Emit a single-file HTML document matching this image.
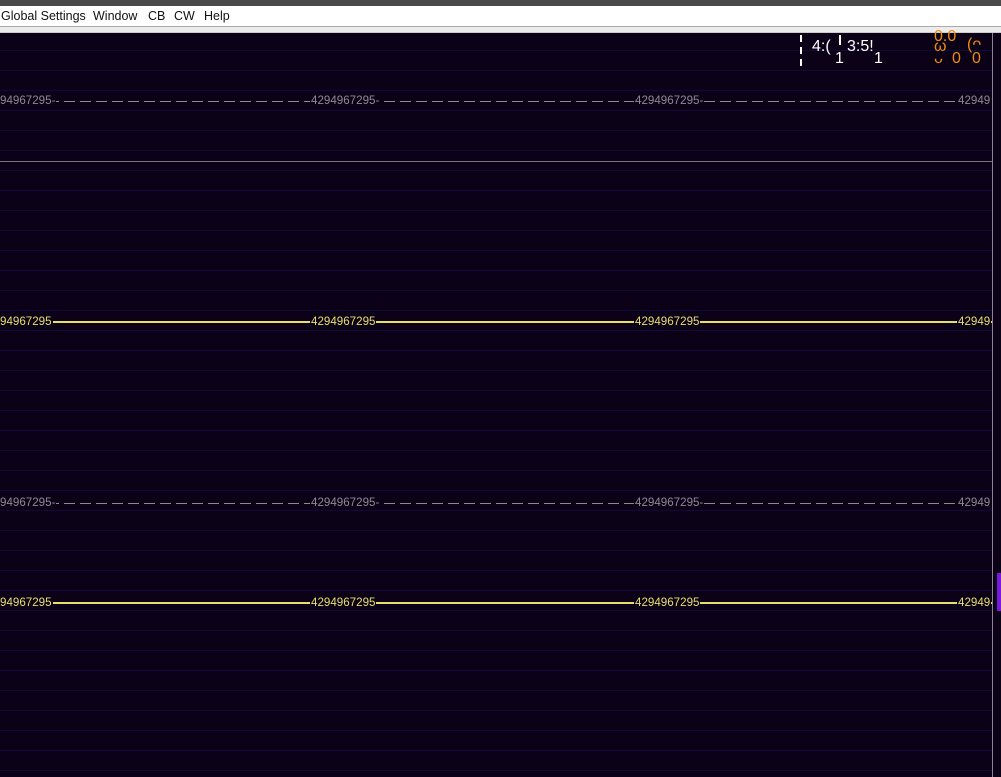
<!DOCTYPE html>
<html><head><style>
body{margin:0;width:1001px;height:777px;overflow:hidden;background:#0b0218;font-family:"Liberation Sans",sans-serif;position:relative}
.top{position:absolute;left:0;top:0;width:1001px;height:6px;background:#4a4a4a}
.menu{position:absolute;left:0;top:6px;width:1001px;height:21px;background:#fff;font-size:12.5px;color:#111}
.menu span{position:absolute;top:3px}
.sep{position:absolute;left:0;top:26px;width:1001px;height:7px;background:#ececec;border-top:1px solid #aaa;border-bottom:1px solid #ccc;box-sizing:border-box}
.grid{position:absolute;left:0;top:33px;width:992px;height:744px;background:repeating-linear-gradient(to bottom,transparent 0,transparent 17px,#0f0a3a 17px,#0f0a3a 18px,transparent 18px,transparent 20px)}
.vl{position:absolute;left:992px;top:33px;width:1px;height:744px;background:#8a8590}
.hl{position:absolute;left:0;top:161px;width:992px;height:1px;background:#7a7580}
.row{position:absolute;left:0;width:992px;height:14px;font-size:11.6px}
.row .ln{position:absolute;top:7px;height:1px}
.row span{position:absolute;top:0;background:#0b0218;padding:0 1px}
.g{color:#8e8a93}.g .ln{background:repeating-linear-gradient(to right,#8e8a93 0 11px,transparent 11px 16px)}
.y{color:#e8df6a}.y .ln{height:2px;background:#e8df6a;top:6px}
.w{position:absolute;color:#fff;font-size:16px}
.o{position:absolute;color:#f08a10;font-size:16px}
</style></head><body>
<div class="top"></div>
<div class="menu"><span style="left:1px">Global Settings</span><span style="left:93px">Window</span><span style="left:148px">CB</span><span style="left:174px">CW</span><span style="left:204px">Help</span></div>
<div class="sep"></div>
<div class="grid"></div>
<div class="vl"></div>
<div class="hl"></div>
<div class="w" style="left:812px;top:38px">4:(</div><div class="w" style="left:847px;top:38px">3:5!</div>
<div class="w" style="left:835px;top:50px">1</div><div class="w" style="left:874px;top:50px">1</div>
<div style="position:absolute;left:800px;top:35px;width:2px;height:32px;background:repeating-linear-gradient(#fff 0 7px,transparent 7px 12px)"></div>
<div style="position:absolute;left:839px;top:35px;width:2px;height:10px;background:#fff"></div>
<div class="o" style="left:934px;top:28px">0.0</div><div class="o" style="left:934px;top:38px">ω</div><div class="o" style="left:967px;top:36px">(ᴖ</div>
<div class="o" style="left:934px;top:50px">ᴗ</div><div class="o" style="left:952px;top:50px">0</div><div class="o" style="left:972px;top:50px">0</div>
<div style="position:absolute;left:997px;top:573px;width:4px;height:38px;background:#7a16e0"></div>

<div class="row g" style="top:94px"><div class="ln" style="left:0;width:992px"></div><span style="left:-1px">94967295-</span><span style="left:310px">4294967295-</span><span style="left:634px">4294967295-</span><span style="left:957px">42949</span></div>
<div class="row y" style="top:315px"><div class="ln" style="left:0;width:992px"></div><span style="left:-1px">94967295</span><span style="left:310px">4294967295</span><span style="left:634px">4294967295</span><span style="left:957px">42949</span></div>
<div class="row g" style="top:496px"><div class="ln" style="left:0;width:992px"></div><span style="left:-1px">94967295-</span><span style="left:310px">4294967295-</span><span style="left:634px">4294967295-</span><span style="left:957px">42949</span></div>
<div class="row y" style="top:596px"><div class="ln" style="left:0;width:992px"></div><span style="left:-1px">94967295</span><span style="left:310px">4294967295</span><span style="left:634px">4294967295</span><span style="left:957px">42949</span></div>
</body></html>
